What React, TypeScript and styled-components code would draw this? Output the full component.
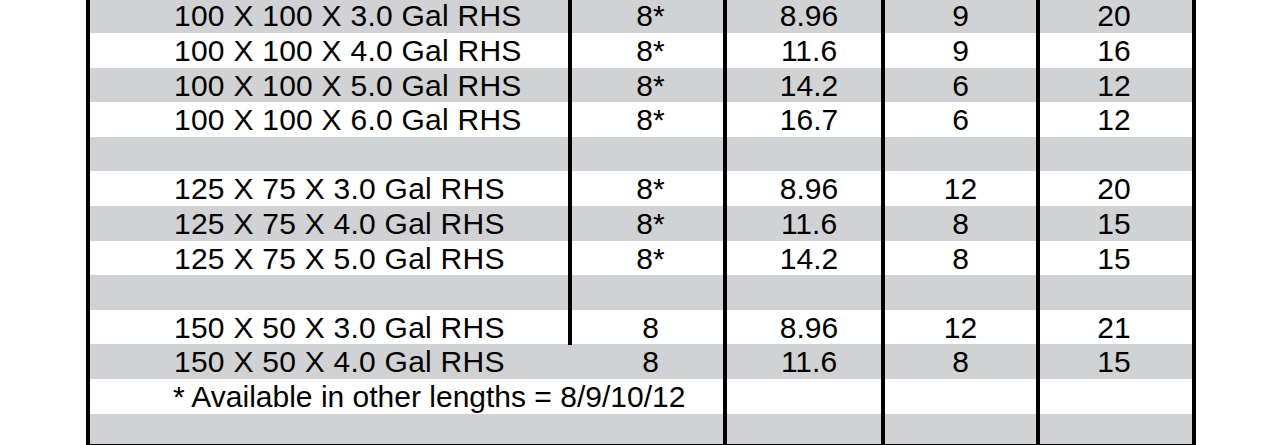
import React, { FC } from 'react'
import styled, { createGlobalStyle } from 'styled-components'

interface Item {
  size?: string
  length?: string
  weight?: string
  perRow?: string
  rows?: string
  note?: string
  splitLength?: boolean
}

const items: Item[] = [
  { size: '100 X 100 X 3.0 Gal RHS', length: '8*', weight: '8.96', perRow: '9', rows: '20', splitLength: true },
  { size: '100 X 100 X 4.0 Gal RHS', length: '8*', weight: '11.6', perRow: '9', rows: '16', splitLength: true },
  { size: '100 X 100 X 5.0 Gal RHS', length: '8*', weight: '14.2', perRow: '6', rows: '12', splitLength: true },
  { size: '100 X 100 X 6.0 Gal RHS', length: '8*', weight: '16.7', perRow: '6', rows: '12', splitLength: true },
  { splitLength: true },
  { size: '125 X 75 X 3.0 Gal RHS', length: '8*', weight: '8.96', perRow: '12', rows: '20', splitLength: true },
  { size: '125 X 75 X 4.0 Gal RHS', length: '8*', weight: '11.6', perRow: '8', rows: '15', splitLength: true },
  { size: '125 X 75 X 5.0 Gal RHS', length: '8*', weight: '14.2', perRow: '8', rows: '15', splitLength: true },
  { splitLength: true },
  { size: '150 X 50 X 3.0 Gal RHS', length: '8', weight: '8.96', perRow: '12', rows: '21', splitLength: true },
  { size: '150 X 50 X 4.0 Gal RHS', length: '8', weight: '11.6', perRow: '8', rows: '15' },
  { note: '* Available in other lengths = 8/9/10/12' },
  {},
]

const App: FC = () => {
  return (
    <>
      <GlobalStyle />
      <Sheet>
        {items.map((item, i) => (
          <Row key={i} $shaded={i % 2 === 0} $last={i === items.length - 1}>
            {item.note ? (
              <Note>{item.note}</Note>
            ) : (
              <>
                <SizeCell>{item.size}</SizeCell>
                <Cell $divided={item.splitLength} $shift={3}>{item.length}</Cell>
              </>
            )}
            <Cell $divided $shift={5}>{item.weight}</Cell>
            <Cell $divided>{item.perRow}</Cell>
            <Cell $divided>{item.rows}</Cell>
          </Row>
        ))}
      </Sheet>
    </>
  )
}

const GlobalStyle = createGlobalStyle`
  html, body {
    margin: 0;
    padding: 0;
    background: #ffffff;
    overflow: hidden;
  }
  body {
    font-family: "Liberation Sans", Arial, sans-serif;
    color: #000000;
  }
`

const Sheet = styled.div`
  margin: -1.6px 0 0 86px;
  width: 1110px;
  border-left: 4px solid #000;
  border-right: 4px solid #000;
  border-bottom: 4px solid #000;
  box-sizing: border-box;
`

const Row = styled.div<{ $shaded: boolean; $last: boolean }>`
  display: grid;
  grid-template-columns: 478px 155px 158px 155px 152px;
  height: ${(p) => (p.$last ? '30.6px' : '34.6px')};
  background: ${(p) => (p.$shaded ? '#d1d2d4' : '#ffffff')};
  font-size: 30px;
  line-height: 34.6px;
`

const SizeCell = styled.div`
  padding: 1px 0 0 84px;
  letter-spacing: 0.25px;
  white-space: nowrap;
`

const Cell = styled.div<{ $divided?: boolean; $shift?: number }>`
  box-sizing: border-box;
  border-left: 4px solid ${(p) => (p.$divided ? '#000' : 'transparent')};
  padding: 1px 0 0 ${(p) => (p.$shift ?? 0) * 2}px;
  text-align: center;
  white-space: nowrap;
`

const Note = styled.div`
  grid-column: span 2;
  padding: 1px 0 0 83px;
  white-space: nowrap;
`

export default App
